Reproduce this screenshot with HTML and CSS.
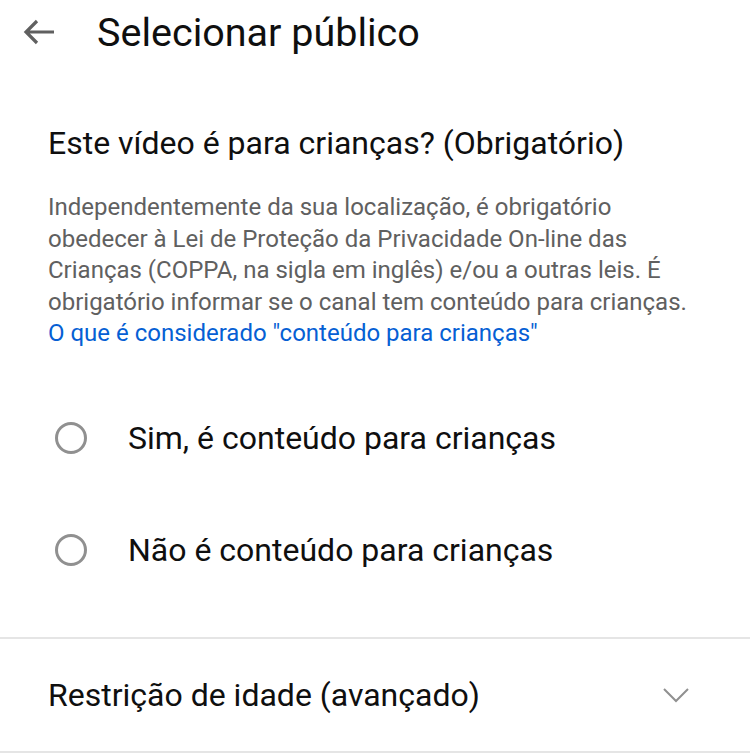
FILE: index.html
```html
<html>
<head>
  <title>Selecionar público</title>
  <link rel="stylesheet" href="styles.css">
</head>
<body>
  <div class="page">
    <div class="topbar">
      <svg class="back" width="34" height="28" viewBox="0 0 34 28">
        <path d="M32 14H4M15 3L4 14l11 11" fill="none" stroke="#606060" stroke-width="3.2"/>
      </svg>
      <h1>Selecionar público</h1>
    </div>

    <div class="kids">
      <h2>Este vídeo é para crianças? (Obrigatório)</h2>
      <p class="info">
        Independentemente da sua localização, é obrigatório<br>
        obedecer à Lei de Proteção da Privacidade On-line das<br>
        Crianças (COPPA, na sigla em inglês) e/ou a outras leis. É<br>
        obrigatório informar se o canal tem conteúdo para crianças.<br>
        <a href="#">O que é considerado "conteúdo para crianças"</a>
      </p>

      <div class="options">
        <label class="option"><span class="radio"></span>Sim, é conteúdo para crianças</label>
        <label class="option"><span class="radio"></span>Não é conteúdo para crianças</label>
      </div>
    </div>

    <div class="age">
      <span>Restrição de idade (avançado)</span>
      <svg class="chevron" width="28" height="16" viewBox="0 0 28 16">
        <path d="M2 2l12 12L26 2" fill="none" stroke="#909090" stroke-width="2"/>
      </svg>
    </div>
  </div>
</body>
</html>
```

FILE: styles.css
```css
body {
  margin: 0;
  background: #fff;
  font-family: Roboto, "Liberation Sans", sans-serif;
  color: #0f0f0f;
}

.page {
  width: 750px;
}

.topbar {
  display: flex;
  align-items: center;
  height: 64px;
  padding-left: 22px;
}

.back {
  flex-shrink: 0;
}

h1 {
  margin: 0 0 0 41px;
  font-size: 39.5px;
  font-weight: 400;
}

.kids {
  padding: 61px 48px 0;
}

h2 {
  margin: 0;
  font-size: 32px;
  font-weight: 400;
  line-height: 36px;
}

.info {
  margin: 31px 0 0;
  font-size: 24px;
  line-height: 31.5px;
  color: #606060;
  white-space: nowrap;
}

.info a {
  color: #065fd4;
  text-decoration: none;
}

.options {
  margin-top: 32px;
  padding-bottom: 31px;
}

.option {
  display: flex;
  align-items: center;
  height: 112px;
  font-size: 32px;
}

.radio {
  flex-shrink: 0;
  width: 26px;
  height: 26px;
  border: 3px solid #909090;
  border-radius: 50%;
  margin: 0 41px 0 7px;
}

.age {
  display: flex;
  align-items: center;
  justify-content: space-between;
  height: 112px;
  padding: 0 60px 0 48px;
  border-top: 2px solid #e5e5e5;
  border-bottom: 2px solid #e5e5e5;
  font-size: 32px;
}
```
